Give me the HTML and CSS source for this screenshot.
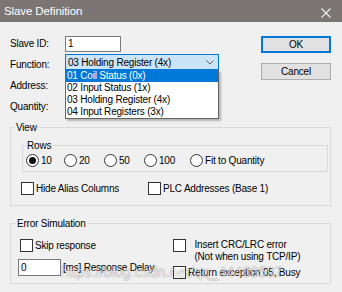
FILE: index.html
```html
<!DOCTYPE html>
<html lang="en">
<head>
    <meta charset="UTF-8">
    <meta name="viewport" content="width=device-width, initial-scale=1.0">
    <title>Slave Definition</title>
    <link rel="stylesheet" href="styles.css">
</head>
<body>
    <div class="dialog">
        <div class="titlebar">
            <span>Slave Definition</span>
            <svg class="close" width="10" height="10" viewBox="0 0 10 10">
                <path d="M0.5 0.5 L9.5 9.5 M9.5 0.5 L0.5 9.5" stroke="#f2f2f2" stroke-width="1.1" fill="none"/>
            </svg>
        </div>
        <div class="content">
            <div class="top">
                <div class="fields">
                    <div class="row"><span class="label">Slave ID:</span><span class="textbox">1</span></div>
                    <div class="row"><span class="label">Function:</span>
                        <div class="combo">
                            <span>03 Holding Register (4x)</span>
                            <svg width="8" height="5" viewBox="0 0 8 5"><path d="M0.5 0.5 L4 4 L7.5 0.5" stroke="#606060" fill="none"/></svg>
                        </div>
                    </div>
                    <div class="row"><span class="label">Address:</span><span class="textbox"></span></div>
                    <div class="row"><span class="label">Quantity:</span><span class="textbox"></span></div>
                    <ul class="droplist">
                        <li class="selected">01 Coil Status (0x)</li>
                        <li>02 Input Status (1x)</li>
                        <li>03 Holding Register (4x)</li>
                        <li>04 Input Registers (3x)</li>
                    </ul>
                </div>
                <div class="buttons">
                    <button class="btn default">OK</button>
                    <button class="btn">Cancel</button>
                </div>
            </div>

            <fieldset class="group view">
                <legend>View</legend>
                <fieldset class="group rows">
                    <legend>Rows</legend>
                    <div class="radios">
                        <span class="radio"><i class="dot checked"></i>10</span>
                        <span class="radio"><i class="dot"></i>20</span>
                        <span class="radio"><i class="dot"></i>50</span>
                        <span class="radio"><i class="dot"></i>100</span>
                        <span class="radio"><i class="dot"></i>Fit to Quantity</span>
                    </div>
                </fieldset>
                <div class="checks">
                    <span class="check"><i class="box"></i>Hide Alias Columns</span>
                    <span class="check"><i class="box"></i>PLC Addresses (Base 1)</span>
                </div>
            </fieldset>

            <fieldset class="group errors">
                <legend>Error Simulation</legend>
                <div class="cols">
                    <div class="col left">
                        <span class="check"><i class="box"></i>Skip response</span>
                        <div class="delay"><span class="textbox wide">0</span>[ms] Response Delay</div>
                    </div>
                    <div class="col">
                        <span class="check top"><i class="box"></i><span>Insert CRC/LRC error<br>(Not when using TCP/IP)</span></span>
                        <span class="check busy"><i class="box"></i>Return exception 05, Busy</span>
                    </div>
                </div>
            </fieldset>
        </div>
        <div class="watermark">https://blog.csdn.net/qq_44469597</div>
    </div>
</body>
</html>
```

FILE: styles.css
```css
body {
    margin: 0;
    font-family: "Liberation Sans", Arial, sans-serif;
    font-size: 10px;
    letter-spacing: -0.2px;
    color: #000;
    background: #f0f0f0;
}
.dialog {
    position: relative;
    width: 342px;
    height: 292px;
    background: #f0f0f0;
    overflow: hidden;
}
.titlebar {
    height: 22px;
    background: #7b7674;
    color: #fff;
    display: flex;
    align-items: center;
    justify-content: space-between;
    padding: 0 11px 0 4px;
    font-size: 11.5px;
    letter-spacing: -0.1px;
}
.close {
    margin-top: 3px;
}
.content {
    padding: 11px 11px 0 10px;
}
.top {
    display: flex;
    justify-content: space-between;
}
.fields {
    position: relative;
    width: 210px;
}
.row {
    height: 21px;
    display: flex;
    align-items: center;
}
.label {
    width: 55px;
}
.textbox {
    box-sizing: border-box;
    width: 56px;
    height: 16px;
    background: #fff;
    border: 1px solid #7a7a7a;
    padding-left: 2px;
    line-height: 14px;
}
.combo {
    align-self: flex-start;
    box-sizing: border-box;
    width: 154px;
    height: 16px;
    background: #cce4f7;
    border: 1px solid #0078d7;
    display: flex;
    align-items: center;
    justify-content: space-between;
    padding: 0 4px 0 2px;
}
.droplist {
    position: absolute;
    left: 55px;
    top: 37px;
    width: 154px;
    box-sizing: border-box;
    margin: 0;
    padding: 0;
    list-style: none;
    background: #fff;
    border: 1px solid #646464;
    border-top: none;
    box-shadow: 2px 2px 2px rgba(0, 0, 0, 0.25);
}
.droplist li {
    height: 12px;
    line-height: 12px;
    padding-left: 1px;
}
.droplist .selected {
    background: #0078d7;
    color: #fff;
}
.buttons {
    display: flex;
    flex-direction: column;
    gap: 10px;
    margin-top: 3px;
}
.btn {
    width: 70px;
    height: 17px;
    padding: 0;
    font: inherit;
    letter-spacing: inherit;
    background: #e1e1e1;
    border: 1px solid #adadad;
}
.btn.default {
    border: 2px solid #0078d7;
}
.group {
    margin: 0;
    border: 1px solid #d9d9d9;
}
.group legend {
    padding: 0 1px;
    line-height: 13px;
}
.view {
    margin-top: 4px;
    padding: 0 2px 10px 11px;
}
.view > legend {
    margin-left: -7px;
}
.rows {
    margin-top: 5px;
    padding: 2px 3px 4px 3px;
}
.radios {
    display: grid;
    grid-template-columns: 38px 40px 40px 46px auto;
}
.radio, .check {
    display: flex;
    align-items: center;
    gap: 2px;
}
.dot {
    width: 11px;
    height: 11px;
    border: 1px solid #333;
    border-radius: 50%;
    background: #fff;
    display: flex;
    align-items: center;
    justify-content: center;
}
.dot.checked::after {
    content: "";
    width: 7px;
    height: 7px;
    border-radius: 50%;
    background: #111;
}
.box {
    width: 11px;
    height: 11px;
    border: 1px solid #333;
    background: #fff;
}
.checks {
    display: grid;
    grid-template-columns: 127px auto;
    margin: 10px 0 0 -1px;
}
.errors {
    margin-top: 11px;
    padding: 9px 9px 4px 9px;
}
.errors > legend {
    margin-left: -4px;
}
.cols {
    display: flex;
}
.col {
    display: flex;
    flex-direction: column;
}
.col.left {
    width: 153px;
    gap: 7px;
}
.delay {
    display: flex;
    align-items: center;
    gap: 2px;
    margin-left: -2px;
}
.textbox.wide {
    width: 43px;
    height: 17px;
    line-height: 15px;
}
.check.top {
    align-items: flex-start;
    line-height: 12px;
}
.check.busy {
    margin-top: 3px;
}
.watermark {
    position: absolute;
    left: 60px;
    top: 264px;
    font-size: 14.5px;
    letter-spacing: 0;
    color: rgba(255, 255, 255, 0.6);
    text-shadow: 1px 0 0 rgba(0, 0, 0, 0.12), -1px 0 0 rgba(0, 0, 0, 0.12), 0 1px 0 rgba(0, 0, 0, 0.12), 0 -1px 0 rgba(0, 0, 0, 0.12);
    pointer-events: none;
}
```
